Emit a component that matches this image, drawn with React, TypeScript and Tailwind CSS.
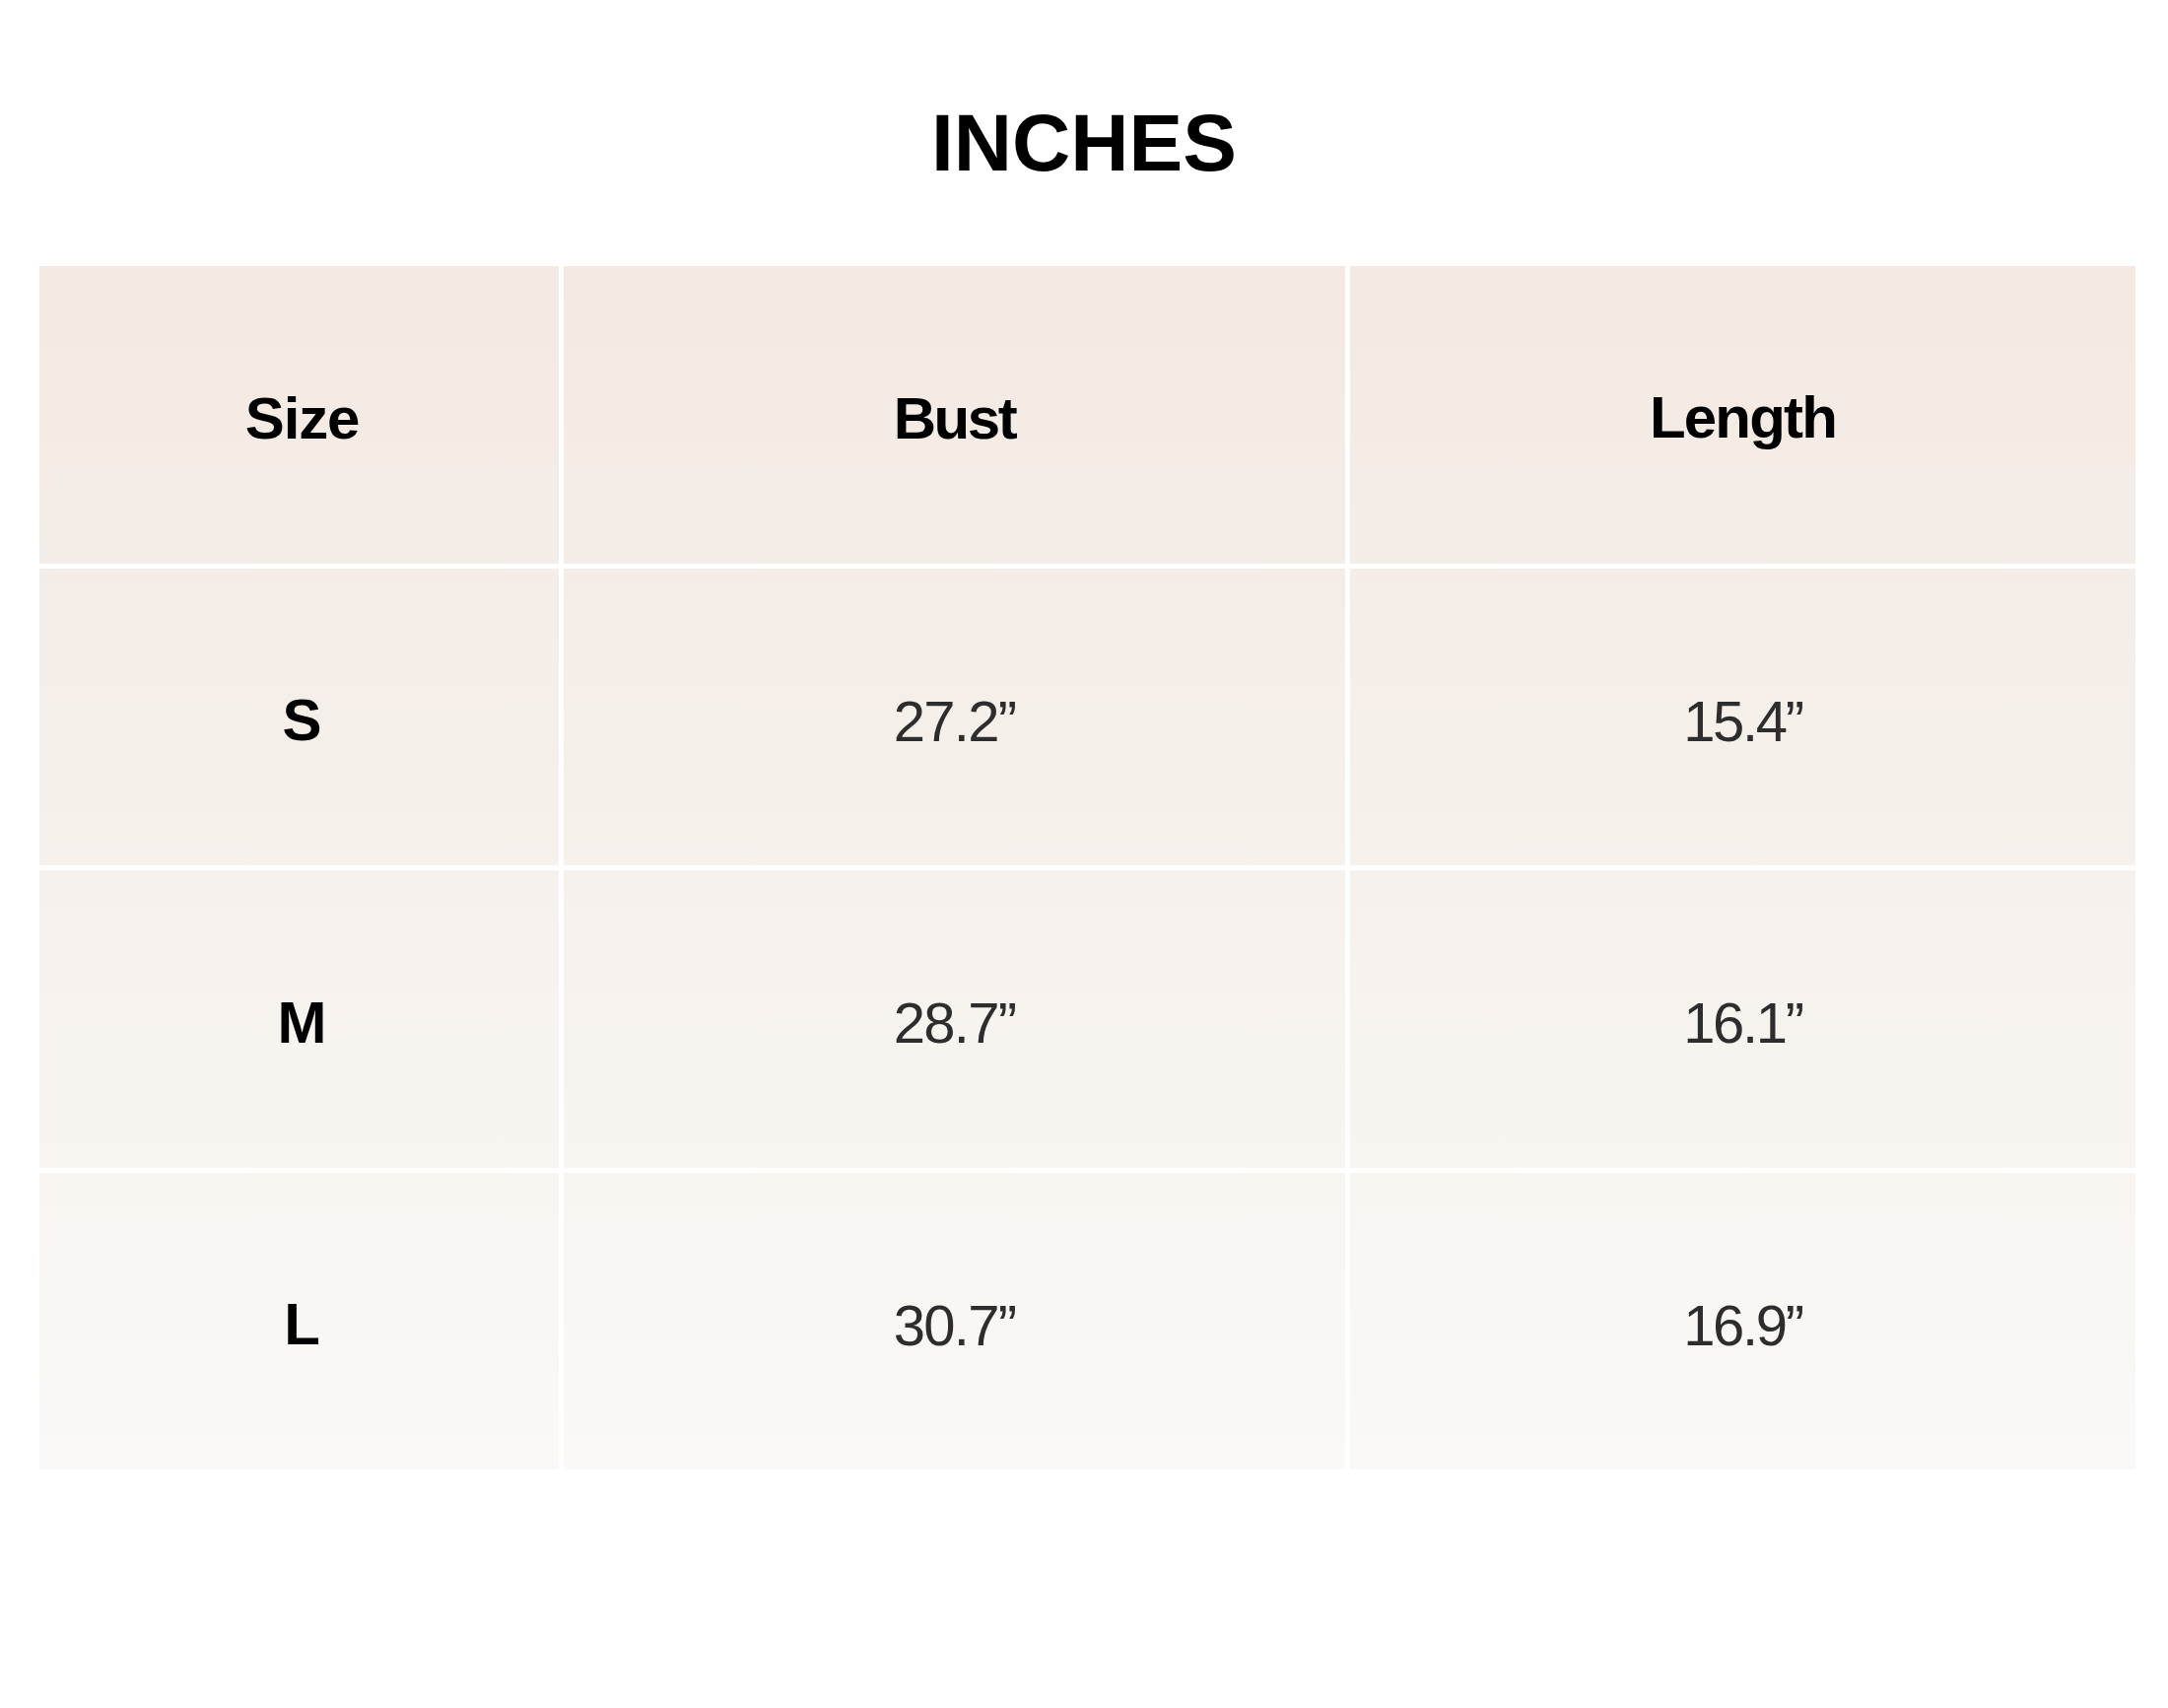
const ROWS = [
  { size: "S", bust: "27.2”", length: "15.4”" },
  { size: "M", bust: "28.7”", length: "16.1”" },
  { size: "L", bust: "30.7”", length: "16.9”" },
];

// one gradient for the whole table, pinned to the page so every cell shares it
const cell =
  "flex items-center justify-center pt-[8px] bg-fixed bg-[linear-gradient(to_bottom,#f3e9e2_270px,#f6f1ec_900px,#faf9f7_1491px)]";

export default function App() {
  return (
    <div className="min-h-screen w-full bg-white font-['Liberation_Sans',Arial,sans-serif] text-black">
      <div className="flex flex-col items-center pt-[104px]">
        <h1 className="text-[82px] font-bold leading-none">INCHES</h1>
      </div>

      <div className="mt-[84px] ml-[40px] grid w-[2127px] grid-cols-[527px_793px_1fr] auto-rows-[301.5px] gap-[5px]">
        <div className={`${cell} pl-[6px]`}>
          <span className="text-[60px] font-bold tracking-[-0.02em]">Size</span>
        </div>
        <div className={cell}>
          <span className="text-[60px] font-bold tracking-[-0.04em]">Bust</span>
        </div>
        <div className={cell}>
          <span className="-mt-[2px] text-[60px] font-bold tracking-[-0.03em]">Length</span>
        </div>

        {ROWS.map((row) => (
          <div key={row.size} className="contents">
            <div className={`${cell} pl-[6px]`}>
              <span className="text-[60px] font-bold">{row.size}</span>
            </div>
            <div className={cell}>
              <span className="text-[58px] text-[#2d2d2d] tracking-[-0.03em]">{row.bust}</span>
            </div>
            <div className={cell}>
              <span className="text-[58px] text-[#2d2d2d] tracking-[-0.04em]">{row.length}</span>
            </div>
          </div>
        ))}
      </div>
    </div>
  );
}
